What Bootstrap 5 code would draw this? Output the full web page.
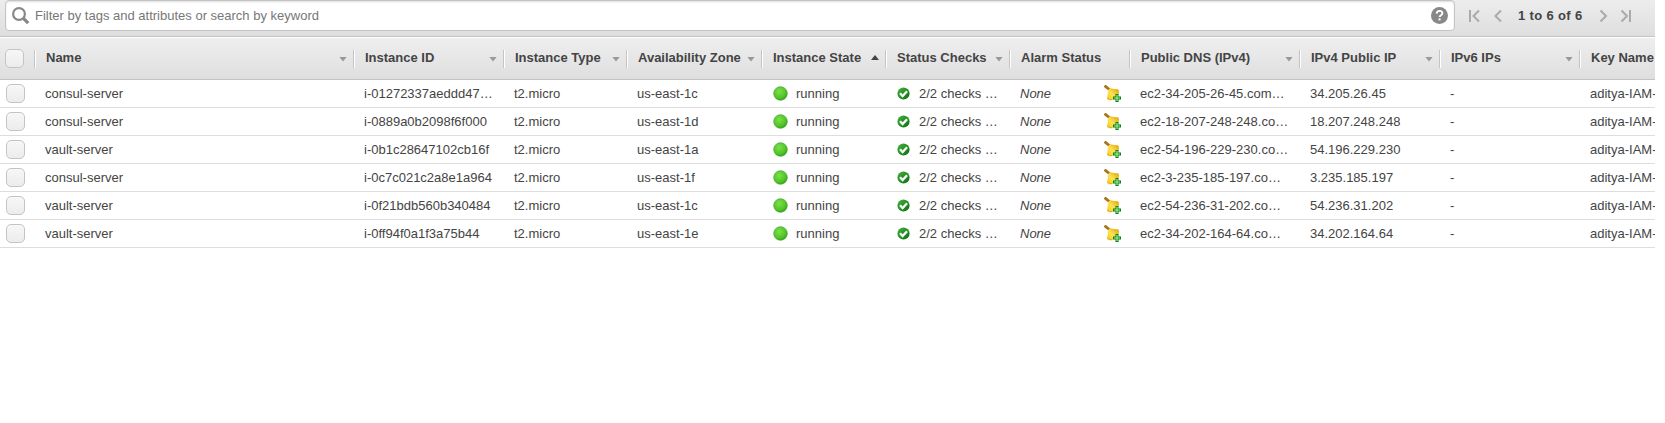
<!DOCTYPE html>
<html lang="en">
<head>
<meta charset="utf-8">
<title>Instances</title>
<link href="https://cdn.jsdelivr.net/npm/bootstrap@5.3.0/dist/css/bootstrap.min.css" rel="stylesheet">
<style>
body{font:13px/16px "Liberation Sans",Arial,sans-serif;color:#444;background:#fff;overflow:hidden}
.panel{width:1655px}
.toolbar{height:37px;background:linear-gradient(#ededed,#dedede);border-bottom:1px solid #c4c4c4}
.filter{width:1450px;height:31px;margin-left:5px;border:1px solid #c4c4c4;border-radius:4px;background:#fff;box-shadow:inset 0 1px 2px #ddd;color:#777;padding:0 6px 0 6px}
.filter span{margin-left:5px}
.pager{margin-left:14px;height:31px}
.pager b{width:66px;margin:0 15px 0 15px;letter-spacing:.35px}
.grid{table-layout:fixed;width:1655px;border-collapse:separate;border-spacing:0}
.grid th,.grid td{padding:0;white-space:nowrap;overflow:hidden;vertical-align:middle}
.grid thead th{height:43px;border-top:1px solid #fff;border-bottom:1px solid #c4c4c4}
.grid thead tr{background:linear-gradient(#efefef,#dedede)}
.grid td{height:28px;border-bottom:1px solid #ddd;padding:0 0 0 11px}
.head{height:18px;border-left:1px solid #c4c4c4;box-shadow:inset 1px 0 #fff;padding:0 6px 2px 11px}
.caret{width:8px;height:5px;background:#999;clip-path:polygon(0 0,100% 0,50% 100%);margin-top:3px}
.caret.up{background:#444;clip-path:polygon(50% 0,100% 100%,0 100%);margin-top:0}
.box{width:19px;height:19px;border:1px solid #c4c4c4;border-radius:5px;background:linear-gradient(#f7f7f7,#ececec);margin-left:5px}
.grid td:first-child{padding:0}
td .box{margin-left:6px}
svg{display:block;flex:none}
</style>
</head>
<body>
<svg width="0" height="0" class="position-absolute"><defs>
<radialGradient id="g" cx=".4" cy=".35" r=".65"><stop offset="0" stop-color="#7ce04c"/><stop offset=".75" stop-color="#4fc425"/><stop offset="1" stop-color="#35a318"/></radialGradient>
<linearGradient id="k" x2="1" y2="1"><stop stop-color="#43b53c"/><stop offset="1" stop-color="#086e0c"/></linearGradient>
<linearGradient id="y" x1="0" y1="1" x2="1" y2="0"><stop stop-color="#f5c51c"/><stop offset=".45" stop-color="#fde352"/><stop offset="1" stop-color="#dc9d08"/></linearGradient>
<symbol id="run" viewBox="0 0 15 15"><circle cx="7.5" cy="7.5" r="6.8" fill="url(#g)" stroke="#45a52c" stroke-width=".7"/></symbol>
<symbol id="ok" viewBox="0 0 13 13"><circle cx="6.5" cy="6.5" r="6.1" fill="url(#k)"/><path d="M3 6.300l2.600 2.700 4.500-4.800" fill="none" stroke="#fff" stroke-width="2.300"/></symbol>
<symbol id="bell" viewBox="0 0 17 17"><path d="M.6.6L5.500 4.800" stroke="#a87420" stroke-width="2.800"/><path d="M3.800 5.600Q4.600 3.400 7 3.200Q9.500 4.200 14 4.200Q15.800 6 14.500 9.500Q12.500 13.500 8.500 14.800Q4.500 15.300 3 13.200Q4.300 9.500 3.800 5.600z" fill="url(#y)"/><path d="M3 13.200Q4.500 15.300 8.500 14.800" fill="none" stroke="#e2a80f"/><path d="M11.500 9h3v2.500H17v3h-2.500V17h-3v-2.500H9v-3h2.500z" fill="#078012"/><path d="M13 10v6M10 13h6" stroke="#a4f09a" stroke-width="1.200"/></symbol>
</defs></svg>
<div class="panel">
  <div class="toolbar d-flex align-items-start">
    <div class="filter d-flex align-items-center">
      <svg width="18" height="18" viewBox="0 0 18 18" fill="none" stroke="#888"><circle cx="7" cy="7" r="5.900" stroke-width="2.200"/><path d="M11.200 11.200l5 5" stroke-width="3.200"/></svg>
      <span>Filter by tags and attributes or search by keyword</span>
      <svg class="ms-auto" width="17" height="17" viewBox="0 0 17 17"><circle cx="8.500" cy="8.500" r="8.500" fill="#888"/><path d="M5.700 6.600q.1-2.700 2.900-2.700 2.800.1 2.800 2.300 0 1.200-1.500 2.100-1.300.7-1.300 1.800" fill="none" stroke="#fff" stroke-width="1.900"/><path d="M7.500 11.400h2.100v2H7.500z" fill="#fff"/></svg>
    </div>
    <div class="pager d-flex align-items-center">
      <svg width="34" height="14" viewBox="0 0 34 14" fill="none" stroke="#aaa" stroke-width="2"><path d="M1 1v12M10 1.500L4.500 7l5.500 5.500M32 1.500L26.500 7l5.500 5.500"/></svg>
      <b class="text-nowrap">1 to 6 of 6</b>
      <svg width="34" height="14" viewBox="0 0 34 14" fill="none" stroke="#aaa" stroke-width="2"><path d="M1.500 1.500L7 7l-5.500 5.500M22.500 1.500L28 7l-5.500 5.500M31 1v12"/></svg>
    </div>
  </div>
  <table class="grid"><colgroup id="cols"></colgroup><thead><tr id="heads"><th><div class="box"></div></th></tr></thead><tbody id="rows"></tbody></table>
</div>
<script>
const heads=[["Name",319,1],["Instance ID",150,1],["Instance Type",123,1],["Availability Zone",135,1],["Instance State",124,2],["Status Checks",124,1],["Alarm Status",120,0],["Public DNS (IPv4)",170,1],["IPv4 Public IP",140,1],["IPv6 IPs",140,1],["Key Name",76,0]];
const rows=[
["consul-server","i-01272337aeddd47…","c","ec2-34-205-26-45.com…","34.205.26.45"],
["consul-server","i-0889a0b2098f6f000","d","ec2-18-207-248-248.co…","18.207.248.248"],
["vault-server","i-0b1c28647102cb16f","a","ec2-54-196-229-230.co…","54.196.229.230"],
["consul-server","i-0c7c021c2a8e1a964","f","ec2-3-235-185-197.co…","3.235.185.197"],
["vault-server","i-0f21bdb560b340484","c","ec2-54-236-31-202.co…","54.236.31.202"],
["vault-server","i-0ff94f0a1f3a75b44","e","ec2-34-202-164-64.co…","34.202.164.64"]];
const icon=(id,w)=>`<svg width="${w}" height="${w}"><use href="#${id}"/></svg>`;
cols.innerHTML='<col style="width:34px">'+heads.map(h=>`<col style="width:${h[1]}px">`).join('');
heads.forEach(h=>document.getElementById('heads').insertAdjacentHTML('beforeend',`<th><div class="head d-flex align-items-center justify-content-between"><span>${h[0]}</span>${h[2]?`<i class="caret${h[2]==2?' up':''}"></i>`:''}</div></th>`));
document.getElementById('rows').innerHTML=rows.map(r=>'<tr>'+[
'<div class="box"></div>',r[0],r[1],'t2.micro','us-east-1'+r[2],
`<div class="d-flex align-items-center gap-2 ps-1" style="margin-left:-3px">${icon('run',15)}<span>running</span></div>`,
`<div class="d-flex align-items-center ps-1" style="gap:9px;margin-left:-3px">${icon('ok',13)}<span>2/2 checks …</span></div>`,
`<div class="d-flex align-items-center justify-content-between pe-2"><em>None</em>${icon('bell',17)}</div>`,
r[3],r[4],'-','aditya-IAM-'].map(c=>`<td>${c}</td>`).join('')+'</tr>').join('');
</script>
<script src="https://cdn.jsdelivr.net/npm/bootstrap@5.3.0/dist/js/bootstrap.bundle.min.js"></script>
</body>
</html>
